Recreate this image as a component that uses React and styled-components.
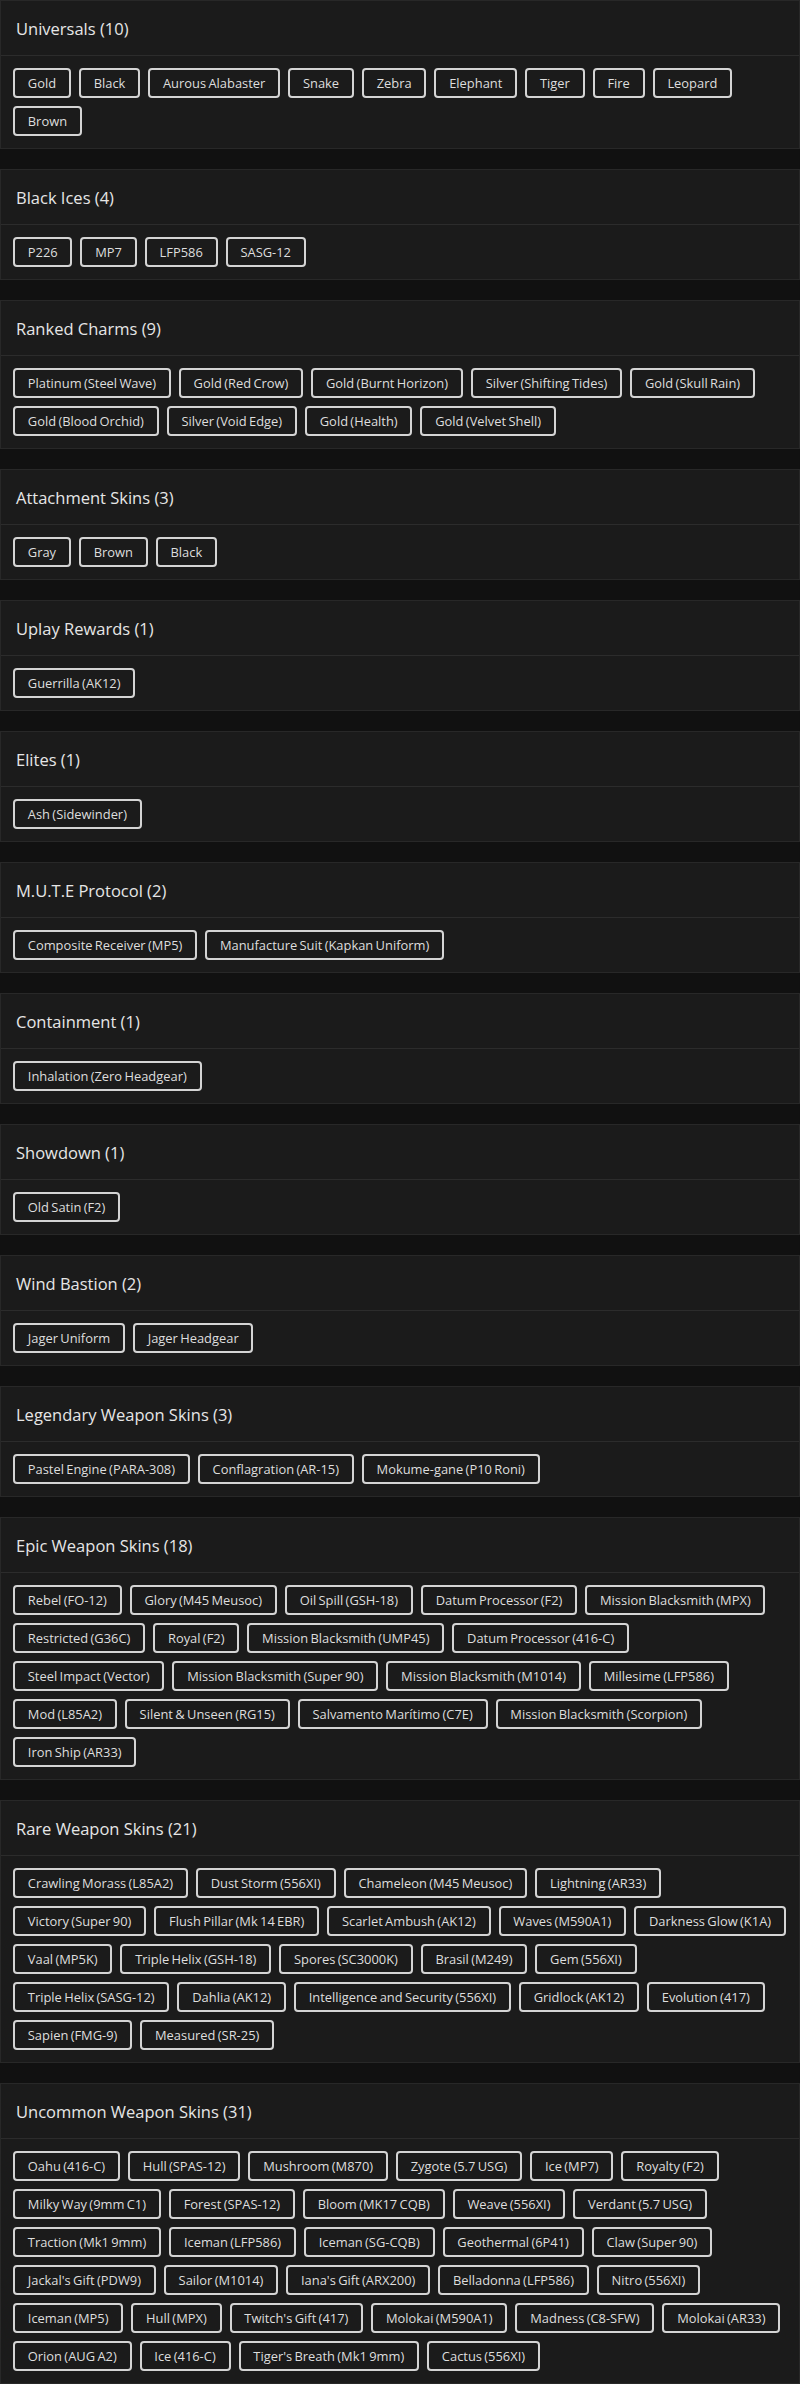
import React from 'react';
import styled, { createGlobalStyle } from 'styled-components';

const sections = [
  { title: 'Universals', items: ['Gold', 'Black', 'Aurous Alabaster', 'Snake', 'Zebra', 'Elephant', 'Tiger', 'Fire', 'Leopard', 'Brown'] },
  { title: 'Black Ices', items: ['P226', 'MP7', 'LFP586', 'SASG-12'] },
  {
    title: 'Ranked Charms',
    items: ['Platinum (Steel Wave)', 'Gold (Red Crow)', 'Gold (Burnt Horizon)', 'Silver (Shifting Tides)', 'Gold (Skull Rain)', 'Gold (Blood Orchid)', 'Silver (Void Edge)', 'Gold (Health)', 'Gold (Velvet Shell)'],
  },
  { title: 'Attachment Skins', items: ['Gray', 'Brown', 'Black'] },
  { title: 'Uplay Rewards', items: ['Guerrilla (AK12)'] },
  { title: 'Elites', items: ['Ash (Sidewinder)'] },
  { title: 'M.U.T.E Protocol', items: ['Composite Receiver (MP5)', 'Manufacture Suit (Kapkan Uniform)'] },
  { title: 'Containment', items: ['Inhalation (Zero Headgear)'] },
  { title: 'Showdown', items: ['Old Satin (F2)'] },
  { title: 'Wind Bastion', items: ['Jager Uniform', 'Jager Headgear'] },
  { title: 'Legendary Weapon Skins', items: ['Pastel Engine (PARA-308)', 'Conflagration (AR-15)', 'Mokume-gane (P10 Roni)'] },
  {
    title: 'Epic Weapon Skins',
    items: [
      'Rebel (FO-12)', 'Glory (M45 Meusoc)', 'Oil Spill (GSH-18)', 'Datum Processor (F2)', 'Mission Blacksmith (MPX)',
      'Restricted (G36C)', 'Royal (F2)', 'Mission Blacksmith (UMP45)', 'Datum Processor (416-C)',
      'Steel Impact (Vector)', 'Mission Blacksmith (Super 90)', 'Mission Blacksmith (M1014)', 'Millesime (LFP586)',
      'Mod (L85A2)', 'Silent & Unseen (RG15)', 'Salvamento Marítimo (C7E)', 'Mission Blacksmith (Scorpion)',
      'Iron Ship (AR33)',
    ],
  },
  {
    title: 'Rare Weapon Skins',
    items: [
      'Crawling Morass (L85A2)', 'Dust Storm (556XI)', 'Chameleon (M45 Meusoc)', 'Lightning (AR33)',
      'Victory (Super 90)', 'Flush Pillar (Mk 14 EBR)', 'Scarlet Ambush (AK12)', 'Waves (M590A1)', 'Darkness Glow (K1A)',
      'Vaal (MP5K)', 'Triple Helix (GSH-18)', 'Spores (SC3000K)', 'Brasil (M249)', 'Gem (556XI)',
      'Triple Helix (SASG-12)', 'Dahlia (AK12)', 'Intelligence and Security (556XI)', 'Gridlock (AK12)', 'Evolution (417)',
      'Sapien (FMG-9)', 'Measured (SR-25)',
    ],
  },
  {
    title: 'Uncommon Weapon Skins',
    items: [
      'Oahu (416-C)', 'Hull (SPAS-12)', 'Mushroom (M870)', 'Zygote (5.7 USG)', 'Ice (MP7)', 'Royalty (F2)',
      'Milky Way (9mm C1)', 'Forest (SPAS-12)', 'Bloom (MK17 CQB)', 'Weave (556XI)', 'Verdant (5.7 USG)',
      'Traction (Mk1 9mm)', 'Iceman (LFP586)', 'Iceman (SG-CQB)', 'Geothermal (6P41)', 'Claw (Super 90)',
      "Jackal's Gift (PDW9)", 'Sailor (M1014)', "Iana's Gift (ARX200)", 'Belladonna (LFP586)', 'Nitro (556XI)',
      'Iceman (MP5)', 'Hull (MPX)', "Twitch's Gift (417)", 'Molokai (M590A1)', 'Madness (C8-SFW)', 'Molokai (AR33)',
      'Orion (AUG A2)', 'Ice (416-C)', "Tiger's Breath (Mk1 9mm)", 'Cactus (556XI)',
    ],
  },
];

const GlobalStyle = createGlobalStyle`
  body {
    margin: 0;
    background: #111111;
    font-family: "Open Sans", "Noto Sans", sans-serif;
  }
`;

function App() {
  return (
    <>
      <GlobalStyle />
      <Page>
        {sections.map((section) => (
          <Card key={section.title}>
            <CardHeader>
              {section.title} ({section.items.length})
            </CardHeader>
            <CardBody>
              {section.items.map((item, i) => (
                <Tag key={item + i}>{item}</Tag>
              ))}
            </CardBody>
          </Card>
        ))}
      </Page>
    </>
  );
}

const Page = styled.div`
  display: flex;
  flex-direction: column;
  gap: 20px;
`;

const Card = styled.section`
  background: #1b1b1b;
  border: 1px solid #282828;
`;

const CardHeader = styled.h5`
  margin: 0;
  height: 54px;
  display: flex;
  align-items: center;
  padding: 0 15px;
  border-bottom: 1px solid #2c2c2c;
  color: #e6e6e6;
  font-size: 16.5px;
  font-weight: 500;
`;

const CardBody = styled.div`
  display: flex;
  flex-wrap: wrap;
  gap: 8px;
  padding: 12px;
`;

const Tag = styled.button`
  height: 30px;
  padding: 0 12.8px;
  background: #1b1b1b;
  border: 2px solid #d4d4d4;
  border-radius: 4px;
  color: #dedede;
  font-family: inherit;
  font-size: 12.9px;
  word-spacing: -1px;
  line-height: 26px;
  white-space: nowrap;
`;

export default App;
